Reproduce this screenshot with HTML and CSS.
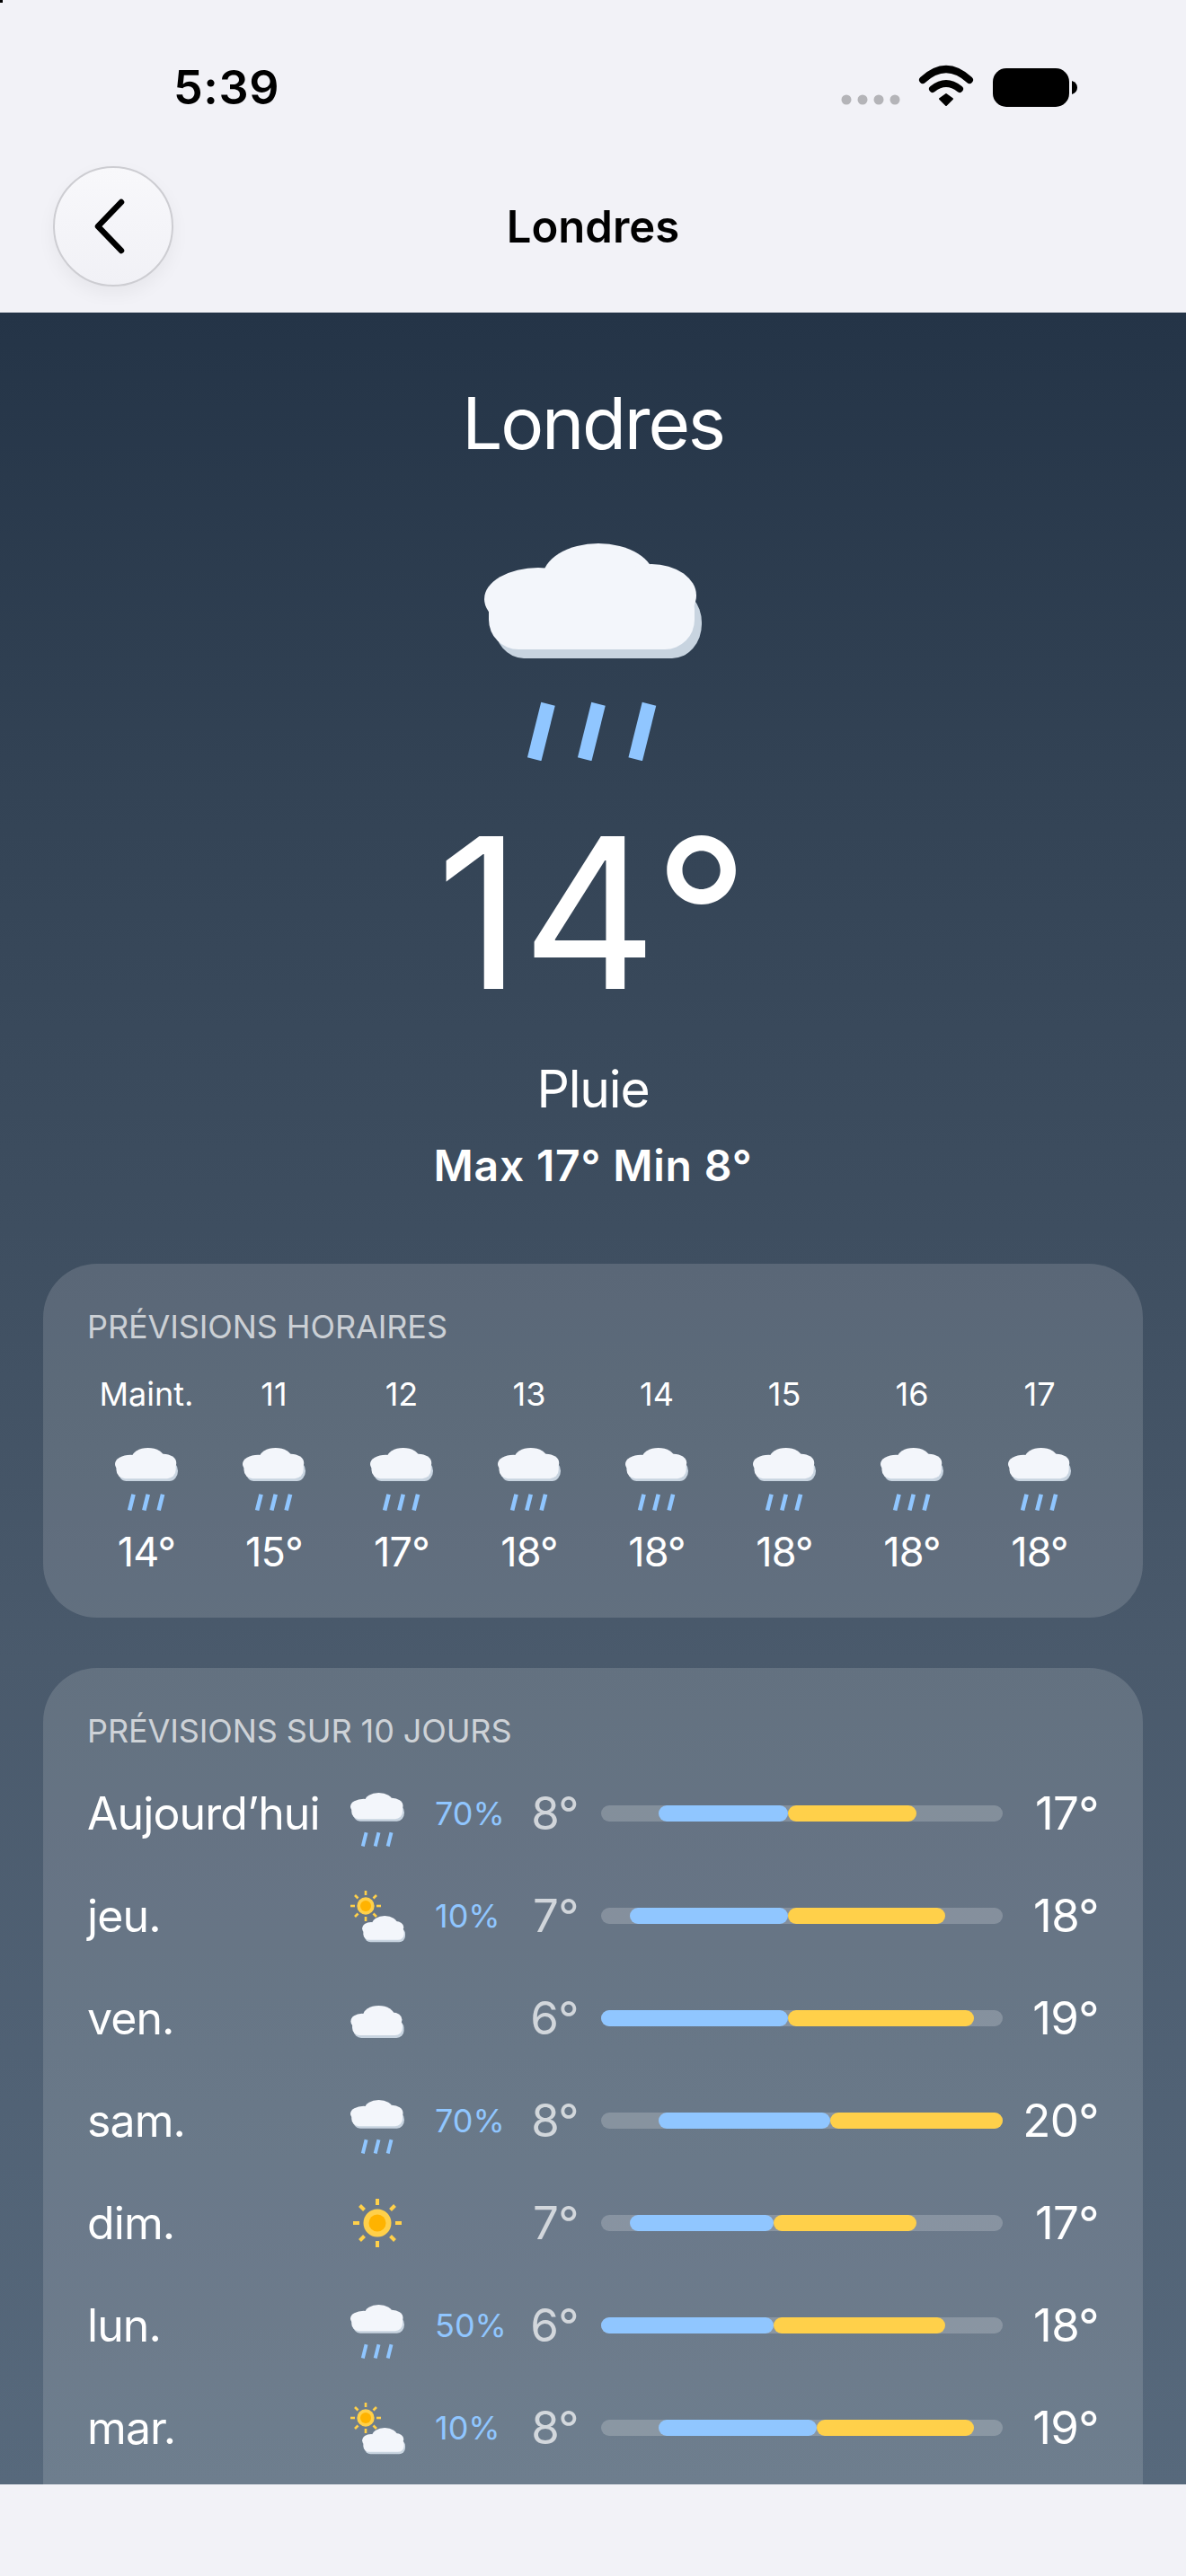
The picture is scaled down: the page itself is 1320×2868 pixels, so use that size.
FILE: index.html
```html
<!DOCTYPE html>
<html lang="fr">
<head>
<meta charset="utf-8">
<title>Londres</title>
<link rel="stylesheet" href="styles.css">
</head>
<body>
<svg class="defs" width="0" height="0" aria-hidden="true">
  <defs>
    <g id="puff">
      <rect x="8" y="40" width="135" height="47" rx="20" fill="#c8d4e0"/>
      <g fill="#f3f6fb">
        <ellipse cx="75" cy="27" rx="42" ry="27"/>
        <ellipse cx="30" cy="42" rx="30" ry="21"/>
        <ellipse cx="112" cy="38" rx="26" ry="20"/>
        <rect x="4" y="35" width="135" height="45" rx="20"/>
      </g>
    </g>
    <symbol id="cloud-rain" viewBox="0 0 242 242">
      <rect x="11" y="50" width="231" height="78" rx="33" ry="38" fill="#c8d4e0"/>
      <g fill="#f3f6fb">
        <ellipse cx="127" cy="38" rx="62" ry="38"/>
        <ellipse cx="60" cy="62" rx="60" ry="35"/>
        <ellipse cx="186" cy="58" rx="50" ry="35"/>
        <rect x="5" y="40" width="229" height="78" rx="33"/>
      </g>
      <g stroke="#90c6ff" stroke-width="16">
        <line x1="71" y1="178.7" x2="55.7" y2="240.3"/>
        <line x1="127" y1="178.7" x2="111.7" y2="240.3"/>
        <line x1="183.5" y1="178.7" x2="168.2" y2="240.3"/>
      </g>
    </symbol>
    <symbol id="cloud" viewBox="0 0 143 87">
      <use href="#puff"/>
    </symbol>
    <symbol id="sun" viewBox="0 0 60 60">
      <g stroke="#ffd04a" stroke-width="4">
        <line x1="30" y1="3" x2="30" y2="10"/>
        <line x1="30" y1="50" x2="30" y2="57"/>
        <line x1="3" y1="30" x2="10" y2="30"/>
        <line x1="50" y1="30" x2="57" y2="30"/>
        <line x1="10.5" y1="10.5" x2="15.5" y2="15.5"/>
        <line x1="49.5" y1="10.5" x2="44.5" y2="15.5"/>
        <line x1="10.5" y1="49.5" x2="15.5" y2="44.5"/>
        <line x1="49.5" y1="49.5" x2="44.5" y2="44.5"/>
      </g>
      <circle cx="30" cy="30" r="15.5" fill="#ffd04a"/>
      <circle cx="30" cy="30" r="9.5" fill="#ffb300"/>
    </symbol>
    <symbol id="sun-cloud" viewBox="0 0 62 60">
      <g stroke="#ffd04a" stroke-width="2.6">
        <line x1="17" y1="2" x2="17" y2="7"/>
        <line x1="17" y1="31" x2="17" y2="36"/>
        <line x1="0" y1="19" x2="5" y2="19"/>
        <line x1="29" y1="19" x2="34" y2="19"/>
        <line x1="5" y1="7" x2="8.5" y2="10.5"/>
        <line x1="29" y1="7" x2="25.5" y2="10.5"/>
        <line x1="5" y1="31" x2="8.5" y2="27.5"/>
        <line x1="29" y1="31" x2="25.5" y2="27.5"/>
      </g>
      <circle cx="17" cy="19" r="9.7" fill="#ffd04a"/>
      <circle cx="17" cy="19" r="6" fill="#ffb300"/>
      <use href="#puff" transform="translate(13 30) scale(0.3357)"/>
    </symbol>
  </defs>
</svg>

<div class="corner"></div>

<div class="screen">
  <header class="status">
    <span class="time">5:39</span>
    <svg class="status-icons" viewBox="0 0 270 50" width="270" height="50">
      <g fill="#b4b4b8">
        <circle cx="12" cy="39" r="5.5"/>
        <circle cx="30" cy="39" r="5.5"/>
        <circle cx="48" cy="39" r="5.5"/>
        <circle cx="66" cy="39" r="5.5"/>
      </g>
      <g fill="none" stroke="#000" stroke-width="8" stroke-linecap="round">
        <path d="M97 17 Q123 -7 149 17"/>
        <path d="M108 27 Q123 15 138 27"/>
      </g>
      <polygon points="116,38 123,33 130,38 123,45" fill="#000" stroke="#000" stroke-width="2" stroke-linejoin="round"/>
      <rect x="175" y="4" width="85" height="43" rx="15" fill="#000"/>
      <path d="M263 18 Q269 20 269 25.5 Q269 31 263 33 Z" fill="#000"/>
    </svg>
  </header>

  <nav class="nav">
    <button class="back" type="button" aria-label="Retour">
      <svg viewBox="0 0 40 64" width="40" height="64">
        <path d="M32 5 L6 32 L32 59" fill="none" stroke="#000" stroke-width="6.5" stroke-linecap="round" stroke-linejoin="round"/>
      </svg>
    </button>
    <h1 class="nav-title">Londres</h1>
  </nav>

  <main class="panel">
    <section class="hero">
      <h2 class="city">Londres</h2>
      <svg class="hero-icon"><use href="#cloud-rain"/></svg>
      <div class="hero-temp">14°</div>
      <div class="hero-cond">Pluie</div>
      <div class="hero-range">Max 17° Min 8°</div>
    </section>

    <section class="card card-hours">
      <h3 class="card-head">PRÉVISIONS HORAIRES</h3>
      <div class="hours">
        <div class="hour"><span class="hour-label">Maint.</span><svg class="hour-icon"><use href="#cloud-rain"/></svg><span class="hour-temp">14°</span></div>
        <div class="hour"><span class="hour-label">11</span><svg class="hour-icon"><use href="#cloud-rain"/></svg><span class="hour-temp">15°</span></div>
        <div class="hour"><span class="hour-label">12</span><svg class="hour-icon"><use href="#cloud-rain"/></svg><span class="hour-temp">17°</span></div>
        <div class="hour"><span class="hour-label">13</span><svg class="hour-icon"><use href="#cloud-rain"/></svg><span class="hour-temp">18°</span></div>
        <div class="hour"><span class="hour-label">14</span><svg class="hour-icon"><use href="#cloud-rain"/></svg><span class="hour-temp">18°</span></div>
        <div class="hour"><span class="hour-label">15</span><svg class="hour-icon"><use href="#cloud-rain"/></svg><span class="hour-temp">18°</span></div>
        <div class="hour"><span class="hour-label">16</span><svg class="hour-icon"><use href="#cloud-rain"/></svg><span class="hour-temp">18°</span></div>
        <div class="hour"><span class="hour-label">17</span><svg class="hour-icon"><use href="#cloud-rain"/></svg><span class="hour-temp">18°</span></div>
      </div>
    </section>

    <section class="card card-days">
      <h3 class="card-head">PRÉVISIONS SUR 10 JOURS</h3>
      <div class="days">
        <div class="day">
          <span class="day-name">Aujourd’hui</span>
          <svg class="ic ic-rain"><use href="#cloud-rain"/></svg>
          <span class="day-pct">70%</span>
          <span class="day-low">8°</span>
          <div class="bar"><i class="seg cold" style="margin-left:14.29%;width:32.14%"></i><i class="seg warm" style="width:32.14%"></i></div>
          <span class="day-high">17°</span>
        </div>
        <div class="day">
          <span class="day-name">jeu.</span>
          <svg class="ic ic-mixed"><use href="#sun-cloud"/></svg>
          <span class="day-pct">10%</span>
          <span class="day-low">7°</span>
          <div class="bar"><i class="seg cold" style="margin-left:7.14%;width:39.29%"></i><i class="seg warm" style="width:39.29%"></i></div>
          <span class="day-high">18°</span>
        </div>
        <div class="day">
          <span class="day-name">ven.</span>
          <svg class="ic ic-cloud"><use href="#cloud"/></svg>
          <span class="day-pct"></span>
          <span class="day-low">6°</span>
          <div class="bar"><i class="seg cold" style="margin-left:0;width:46.43%"></i><i class="seg warm" style="width:46.43%"></i></div>
          <span class="day-high">19°</span>
        </div>
        <div class="day">
          <span class="day-name">sam.</span>
          <svg class="ic ic-rain"><use href="#cloud-rain"/></svg>
          <span class="day-pct">70%</span>
          <span class="day-low">8°</span>
          <div class="bar"><i class="seg cold" style="margin-left:14.29%;width:42.86%"></i><i class="seg warm" style="width:42.86%"></i></div>
          <span class="day-high">20°</span>
        </div>
        <div class="day">
          <span class="day-name">dim.</span>
          <svg class="ic"><use href="#sun"/></svg>
          <span class="day-pct"></span>
          <span class="day-low">7°</span>
          <div class="bar"><i class="seg cold" style="margin-left:7.14%;width:35.71%"></i><i class="seg warm" style="width:35.71%"></i></div>
          <span class="day-high">17°</span>
        </div>
        <div class="day">
          <span class="day-name">lun.</span>
          <svg class="ic ic-rain"><use href="#cloud-rain"/></svg>
          <span class="day-pct">50%</span>
          <span class="day-low">6°</span>
          <div class="bar"><i class="seg cold" style="margin-left:0;width:42.86%"></i><i class="seg warm" style="width:42.86%"></i></div>
          <span class="day-high">18°</span>
        </div>
        <div class="day">
          <span class="day-name">mar.</span>
          <svg class="ic ic-mixed"><use href="#sun-cloud"/></svg>
          <span class="day-pct">10%</span>
          <span class="day-low">8°</span>
          <div class="bar"><i class="seg cold" style="margin-left:14.29%;width:39.29%"></i><i class="seg warm" style="width:39.29%"></i></div>
          <span class="day-high">19°</span>
        </div>
      </div>
    </section>
  </main>
</div>
</body>
</html>
```
FILE: styles.css
```css
* { box-sizing: border-box; }
html, body { margin: 0; padding: 0; }
body {
  background: #f2f2f7;
  font-family: "Inter", "Liberation Sans", sans-serif;
  color: #fff;
  overflow: hidden;
}
.defs { position: absolute; }
.corner { position: absolute; left: 0; top: 0; width: 3px; height: 3px; background: #000; }
.screen { width: 1320px; height: 2868px; display: flex; flex-direction: column; }

.status { height: 160px; padding: 66px 120px 0 193px; display: flex; align-items: flex-start; justify-content: space-between; color: #000; }
.time { font-size: 52px; line-height: 64px; font-weight: 600; letter-spacing: .6px; }
.status-icons { margin-top: 6px; display: block; }

.nav { height: 188px; padding: 25px 0 0 59px; position: relative; }
.back {
  width: 134px; height: 134px; padding: 0 0 0 42px; border-radius: 50%;
  border: 2px solid #cdcdd2;
  background: linear-gradient(#f8f8fb, #f1f1f6);
  box-shadow: 0 8px 20px rgba(0,0,0,.05);
  display: flex; align-items: center; justify-content: flex-start;
}
.back svg { display: block; }
.nav-title {
  position: absolute; left: 0; right: 0; top: 26px; margin: 0;
  height: 134px; line-height: 134px; text-align: center;
  font-size: 49px; font-weight: 600; color: #000;
}

.panel {
  height: 2418px; overflow: hidden; padding: 0 48px;
  background: linear-gradient(180deg, #243447 0%, #334355 22%, #3f4f61 44%, #4a5a6c 62%, #506174 80%, #57697c 100%);
}

.hero { display: flex; flex-direction: column; align-items: center; padding-top: 73px; }
.city { margin: 0; font-size: 80px; line-height: 100px; font-weight: 400; letter-spacing: -2.2px; }
.hero-icon { width: 242px; height: 242px; margin-top: 84px; display: block; }
.hero-temp { margin-top: 49px; font-size: 233px; line-height: 240px; font-weight: 400; letter-spacing: .5px; }
.hero-cond { margin-top: 42px; font-size: 57px; line-height: 70px; font-weight: 400; letter-spacing: -1.2px; }
.hero-range { margin-top: 20px; font-size: 48px; line-height: 60px; font-weight: 600; letter-spacing: .8px; }

.card { background: rgba(255,255,255,.14); border-radius: 60px; padding: 48px 49px 48px 49px; }
.card-hours { margin-top: 79px; }
.card-days { margin-top: 56px; height: 1100px; }
.card-head { margin: 0; font-size: 36px; line-height: 44px; font-weight: 400; letter-spacing: -.1px; color: rgba(255,255,255,.7); }

.hours { margin-top: 31px; display: flex; gap: 10px; }
.hour { width: 132px; display: flex; flex-direction: column; align-items: center; }
.hour-label { font-size: 36px; line-height: 44px; }
.hour-icon { width: 70px; height: 70px; margin-top: 38px; display: block; }
.hour-temp { margin-top: 21px; font-size: 45px; line-height: 50px; font-weight: 400; letter-spacing: -.8px; }

.days { margin-top: 13px; display: flex; flex-direction: column; }
.day {
  height: 114px; display: grid;
  grid-template-columns: 293px 60px 120px 74px 472px 107px;
  align-items: center;
}
.day-name { font-size: 50px; font-weight: 400; line-height: 60px; letter-spacing: -.9px; }
.ic { width: 60px; height: 60px; display: block; }
.ic-rain { margin-top: 14px; }
.ic-cloud { height: 36px; margin-top: 8px; }
.ic-mixed { width: 62px; }
.day-pct { padding-left: 34px; font-size: 36px; line-height: 44px; color: #90c6ff; }
.day-low { text-align: right; font-size: 51px; line-height: 60px; font-weight: 400; letter-spacing: -.6px; color: rgba(255,255,255,.7); }
.day-high { text-align: right; font-size: 51px; line-height: 60px; font-weight: 400; letter-spacing: -.6px; }
.bar { width: 447px; height: 18px; margin-left: 25px; border-radius: 9px; background: rgba(255,255,255,.2); display: flex; }
.seg { display: block; height: 18px; border-radius: 9px; }
.cold { background: #90c6ff; }
.warm { background: #ffd04a; }
```
